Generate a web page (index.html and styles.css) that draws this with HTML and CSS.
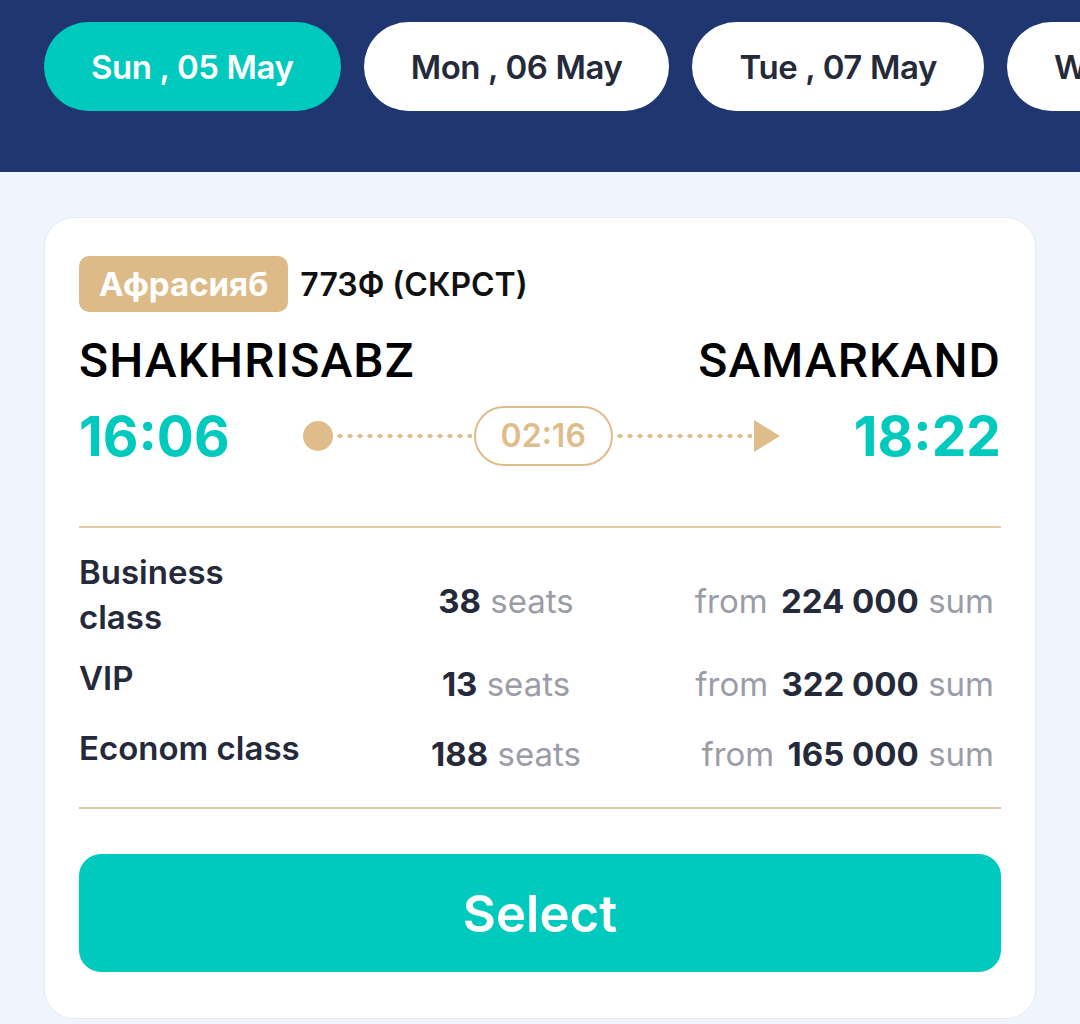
FILE: index.html
```html
<!DOCTYPE html>
<html lang="en">

<head>
    <meta charset="UTF-8">
    <meta name="viewport" content="width=device-width, initial-scale=1.0">
    <title>Trains</title>
    <link rel="stylesheet" href="styles.css">
</head>

<body>
    <header class="dates">
        <button class="date active">Sun , 05 May</button>
        <button class="date">Mon , 06 May</button>
        <button class="date">Tue , 07 May</button>
        <button class="date">Wed , 08 May</button>
    </header>

    <main class="list">
        <div class="card">
            <div class="train-head">
                <span class="badge">Афрасияб</span>
                <span class="train-num">773Ф (СКРСТ)</span>
            </div>

            <div class="cities">
                <span>SHAKHRISABZ</span>
                <span>SAMARKAND</span>
            </div>

            <div class="times">
                <span class="time">16:06</span>
                <div class="route">
                    <span class="dot"></span>
                    <span class="dots"></span>
                    <span class="duration">02:16</span>
                    <span class="dots"></span>
                    <svg class="arrow" width="26" height="32" viewBox="0 0 26 32">
                        <path d="M0 0 L26 16 L0 32 Z" fill="#dfbd8a" />
                    </svg>
                </div>
                <span class="time">18:22</span>
            </div>

            <div class="fares">
                <div class="fare">
                    <span class="fare-name">Business class</span>
                    <span class="seats"><b>38</b> seats</span>
                    <span class="price">from <b>224 000</b> sum</span>
                </div>
                <div class="fare">
                    <span class="fare-name">VIP</span>
                    <span class="seats"><b>13</b> seats</span>
                    <span class="price">from <b>322 000</b> sum</span>
                </div>
                <div class="fare">
                    <span class="fare-name">Econom class</span>
                    <span class="seats"><b>188</b> seats</span>
                    <span class="price">from <b>165 000</b> sum</span>
                </div>
            </div>

            <button class="select-btn">Select</button>
        </div>
    </main>
</body>

</html>
```

FILE: styles.css
```css
body {
    font-family: Inter, "Noto Sans", sans-serif;
    background-color: #f0f4fd;
    color: #252a3a;
    margin: 0;
    padding: 0;
}

.dates {
    display: flex;
    gap: 23px;
    height: 172px;
    box-sizing: border-box;
    padding: 22px 44px 0;
    background-color: #1f3670;
    overflow: hidden;
    white-space: nowrap;
}

.date {
    flex: none;
    height: 89px;
    padding: 0 47px;
    border: none;
    border-radius: 45px;
    background-color: #fff;
    color: #252a3a;
    font-family: Inter, sans-serif;
    font-size: 33px;
    font-weight: 600;
    letter-spacing: -0.4px;
}

.date.active {
    background-color: #00c9bd;
    color: #fff;
}

.list {
    padding: 45px 44px 0;
}

.card {
    background-color: #fff;
    border: 1px solid #e6ebf5;
    border-radius: 30px;
    padding: 38px 34px 46px;
}

.train-head {
    display: flex;
    align-items: center;
    gap: 12px;
}

.badge {
    background-color: #ddbb88;
    color: #fff;
    font-size: 33px;
    font-weight: 700;
    line-height: 56px;
    padding: 0 20px;
    border-radius: 10px;
}

.train-num {
    font-size: 32px;
    font-weight: 600;
    color: #111;
}

.cities {
    display: flex;
    justify-content: space-between;
    margin-top: 21px;
    font-family: Roboto, "Liberation Sans", sans-serif;
    font-size: 48px;
    font-weight: 500;
    letter-spacing: 1.1px;
    line-height: 56px;
    color: #000;
}

.times {
    display: flex;
    align-items: center;
    margin-top: 9px;
}

.time {
    font-size: 55px;
    font-weight: 700;
    line-height: 76px;
    color: #00c9bd;
}

.route {
    flex: 1;
    display: flex;
    align-items: center;
    margin: 0 74px 0 73px;
}

.dot {
    width: 30px;
    height: 30px;
    border-radius: 50%;
    background-color: #dfbd8a;
}

.dots {
    flex: 1;
    height: 6px;
    margin: 0 2px;
    background: radial-gradient(ellipse 3px 2px at center, #dfbd8a 80%, transparent 100%) 0 0 / 10px 6px repeat-x;
}

.duration {
    width: 135px;
    height: 56px;
    border: 2px solid #dfbd8a;
    border-radius: 30px;
    text-align: center;
    line-height: 56px;
    font-size: 32px;
    font-weight: 600;
    color: #dfbd8a;
}

.arrow {
    display: block;
}

.fares {
    margin-top: 52px;
    border-top: 2px solid #e2caa3;
    border-bottom: 2px solid #e2caa3;
    padding: 22px 0 30px;
    display: flex;
    flex-direction: column;
    gap: 10px;
}

.fare {
    display: grid;
    grid-template-columns: 232px 370px 1fr;
    align-items: center;
}

.fare-name {
    font-size: 33px;
    font-weight: 600;
    line-height: 45px;
}

.fare:last-child {
    margin-top: 3px;
}

.seats,
.price {
    padding-top: 12px;
    font-size: 33px;
    line-height: 45px;
    color: #9a9ca8;
}

.seats {
    text-align: center;
    padding-left: 20px;
}

.price {
    text-align: right;
    padding-right: 7px;
    white-space: nowrap;
}

.seats b,
.price b {
    font-weight: 700;
    color: #252a3a;
}

.price b {
    margin-left: 4px;
}

.select-btn {
    display: block;
    width: 100%;
    height: 118px;
    margin-top: 45px;
    border: none;
    border-radius: 22px;
    background-color: #00c9bd;
    color: #fff;
    font-family: Inter, sans-serif;
    font-size: 51px;
    font-weight: 600;
    cursor: pointer;
}
```
